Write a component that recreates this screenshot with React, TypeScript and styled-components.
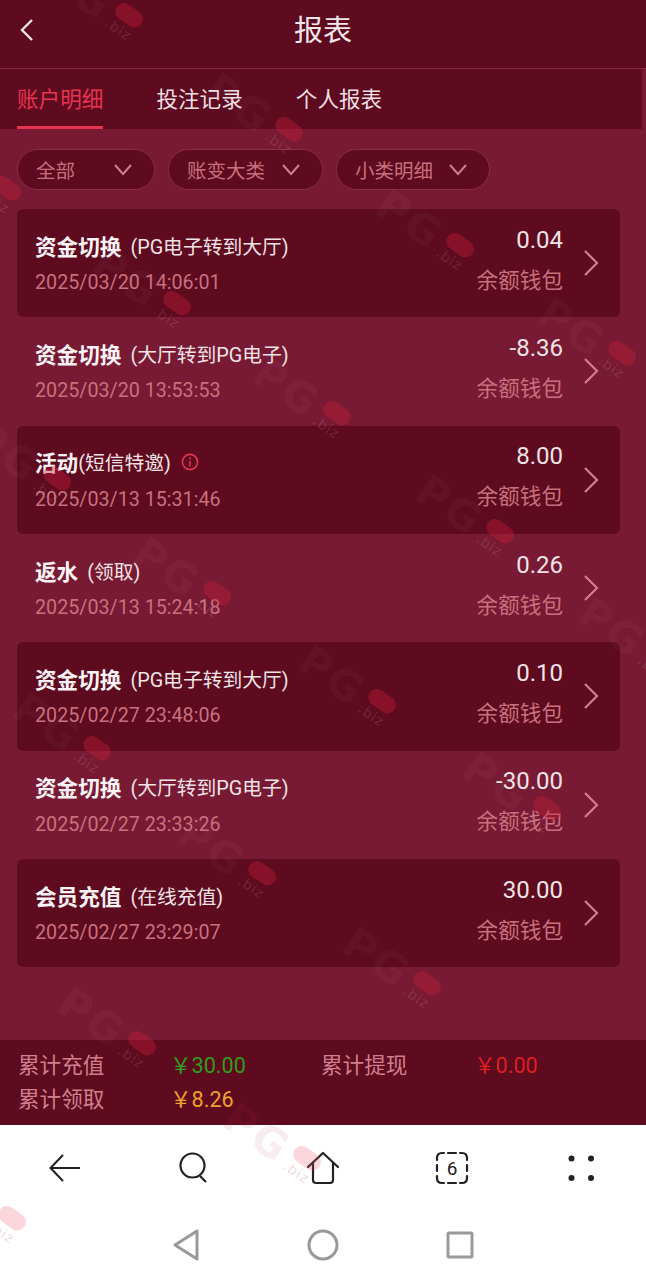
import styled, { createGlobalStyle } from "styled-components";

const GlobalStyle = createGlobalStyle`
	html, body {
		margin: 0;
		padding: 0;
		background: #fff;
	}
	body {
		font-family: Roboto, "Noto Sans CJK SC", "Liberation Sans", sans-serif;
	}
`;

const Page = styled.div`
	position: relative;
	width: 646px;
	height: 1280px;
	overflow: hidden;
	display: flex;
	flex-direction: column;
	background: #781a33;
`;

const Header = styled.header`
	height: 68px;
	flex-shrink: 0;
	box-sizing: content-box;
	display: flex;
	align-items: flex-start;
	justify-content: center;
	position: relative;
	background: #5e0a1f;
	border-bottom: 1px solid #8a2c44;
	color: #f4e6e9;
	font-size: 29px;
	line-height: 62px;
`;

const BackButton = styled.span`
	position: absolute;
	left: 18px;
	top: 17px;
	display: flex;
`;

const Tabs = styled.nav`
	height: 60px;
	width: 642px;
	flex-shrink: 0;
	display: flex;
	gap: 53px;
	padding-left: 17px;
	box-sizing: border-box;
	background: #5e0a1f;
`;

const Tab = styled.span<{ $active?: boolean }>`
	height: 60px;
	box-sizing: border-box;
	line-height: 61px;
	font-size: 21.6px;
	color: ${(p) => (p.$active ? "#e8354f" : "#f0dfe3")};
	border-bottom: 3px solid ${(p) => (p.$active ? "#e8354f" : "transparent")};
`;

const Filters = styled.div`
	display: flex;
	gap: 13px;
	padding: 20px 0 19px 17px;
`;

const Pill = styled.div<{ $width: number }>`
	width: ${(p) => p.$width}px;
	height: 41px;
	box-sizing: border-box;
	padding: 0 21px 0 18px;
	display: flex;
	align-items: center;
	justify-content: space-between;
	border-radius: 21px;
	background: #5e0a1f;
	border: 1px solid #8a2c44;
	color: #c9707f;
	font-size: 19.5px;
`;

const List = styled.div`
	width: 603px;
	margin-left: 17px;
	display: flex;
	flex-direction: column;
`;

const Row = styled.div<{ $shaded: boolean }>`
	height: 108.33px;
	box-sizing: border-box;
	padding: 0 21px 0 18px;
	display: flex;
	align-items: center;
	justify-content: space-between;
	border-radius: 6px;
	background: ${(p) => (p.$shaded ? "#5e0a1f" : "transparent")};
`;

const RowLeft = styled.div`
	display: flex;
	flex-direction: column;
	gap: 9px;
`;

const TitleLine = styled.div`
	display: flex;
	align-items: center;
	height: 30px;
	color: #f1e3e6;
	font-size: 19.8px;
`;

const RowTitle = styled.b`
	font-size: 21.6px;
	font-weight: 700;
	color: #fbf3f5;
`;

const RowNote = styled.span<{ $tight: boolean }>`
	margin-left: ${(p) => (p.$tight ? "0" : "9px")};
`;

const InfoIcon = styled.span`
	display: flex;
	margin-left: 10px;
`;

const DateText = styled.div`
	font-size: 19.7px;
	line-height: 27px;
	color: #c9707f;
`;

const RowRight = styled.div`
	display: flex;
	align-items: center;
	gap: 20px;
`;

const Money = styled.div`
	display: flex;
	flex-direction: column;
	align-items: flex-end;
	gap: 12px;
	padding-bottom: 5px;
`;

const Amount = styled.div`
	font-size: 24px;
	line-height: 28px;
	color: #f1e3e6;
`;

const Wallet = styled.div`
	font-size: 21.6px;
	line-height: 30px;
	color: #c9707f;
`;

const Summary = styled.div`
	margin-top: auto;
	height: 85px;
	flex-shrink: 0;
	box-sizing: border-box;
	padding: 6px 0 0 18px;
	display: grid;
	grid-template-columns: 152px 151px 153px 1fr;
	grid-auto-rows: 34px;
	align-items: center;
	background: #5e0a1f;
	font-size: 21.6px;
`;

const SummaryLabel = styled.span`
	color: #d17f8e;
`;

const SummaryValue = styled.span<{ $color: string }>`
	color: ${(p) => p.$color};
`;

const BrowserBar = styled.div`
	height: 85px;
	flex-shrink: 0;
	display: grid;
	grid-template-columns: repeat(5, 129.2px);
	justify-items: center;
	align-items: center;
	background: #fff;
`;

const SystemBar = styled.div`
	height: 70px;
	flex-shrink: 0;
	display: flex;
	justify-content: center;
	align-items: center;
	gap: 107px;
	background: #fff;
`;

const Mark = styled.div<{ $x: number; $y: number }>`
	position: absolute;
	left: ${(p) => p.$x - 53}px;
	top: ${(p) => p.$y - 25}px;
	width: 106px;
	height: 50px;
	transform: rotate(35deg);
	pointer-events: none;
`;

const MarkLetters = styled.span<{ $light?: boolean }>`
	position: absolute;
	left: 0;
	top: 0;
	font-family: "DejaVu Sans", sans-serif;
	font-size: 42px;
	font-weight: 700;
	letter-spacing: 3px;
	line-height: 46px;
	color: ${(p) => (p.$light ? "rgba(190, 60, 80, 0.1)" : "rgba(255, 255, 255, 0.055)")};
`;

const MarkBiz = styled.span<{ $light?: boolean }>`
	position: absolute;
	left: 76px;
	top: 24px;
	font-family: "DejaVu Sans", sans-serif;
	font-size: 14px;
	letter-spacing: 1px;
	color: ${(p) => (p.$light ? "rgba(190, 60, 80, 0.2)" : "rgba(255, 255, 255, 0.12)")};
`;

const MarkBadge = styled.span<{ $light?: boolean }>`
	position: absolute;
	left: 76px;
	top: 6px;
	width: 30px;
	height: 17px;
	border-radius: 9px;
	background: ${(p) => (p.$light ? "rgba(235, 70, 90, 0.22)" : "rgba(200, 30, 55, 0.38)")};
`;

const marks: { x: number; y: number; light?: boolean }[] = [
	{ x: 92, y: 2 },
	{ x: 252, y: 116 },
	{ x: 423, y: 232 },
	{ x: 140, y: 290 },
	{ x: 585, y: 340 },
	{ x: 300, y: 400 },
	{ x: -30, y: 175 },
	{ x: 463, y: 518 },
	{ x: 20, y: 465 },
	{ x: 180, y: 580 },
	{ x: 345, y: 688 },
	{ x: 625, y: 640 },
	{ x: 60, y: 735 },
	{ x: 510, y: 795 },
	{ x: 225, y: 860 },
	{ x: 390, y: 970 },
	{ x: 105, y: 1030 },
	{ x: 270, y: 1145, light: true },
	{ x: -25, y: 1205, light: true },
];

const rows = [
	{ title: "资金切换", note: "(PG电子转到大厅)", date: "2025/03/20 14:06:01", amount: "0.04" },
	{ title: "资金切换", note: "(大厅转到PG电子)", date: "2025/03/20 13:53:53", amount: "-8.36" },
	{ title: "活动", note: "(短信特邀)", date: "2025/03/13 15:31:46", amount: "8.00", info: true },
	{ title: "返水", note: "(领取)", date: "2025/03/13 15:24:18", amount: "0.26" },
	{ title: "资金切换", note: "(PG电子转到大厅)", date: "2025/02/27 23:48:06", amount: "0.10" },
	{ title: "资金切换", note: "(大厅转到PG电子)", date: "2025/02/27 23:33:26", amount: "-30.00" },
	{ title: "会员充值", note: "(在线充值)", date: "2025/02/27 23:29:07", amount: "30.00" },
];

const filters = [
	{ label: "全部", width: 138 },
	{ label: "账变大类", width: 155 },
	{ label: "小类明细", width: 154 },
];

const Caret = () => (
	<svg width="20" height="14" viewBox="0 0 20 14" fill="none" stroke="#d17f8e" strokeWidth="2">
		<path d="M2 2l8 9 8-9" />
	</svg>
);

const Chevron = () => (
	<svg width="16" height="28" viewBox="0 0 16 28" fill="none" stroke="#d17f8e" strokeWidth="2.2">
		<path d="M2 2l12 12L2 26" />
	</svg>
);

const App = () => {
	return (
		<Page>
			<GlobalStyle />
			<Header>
				<BackButton>
					<svg width="20" height="26" viewBox="0 0 20 26" fill="none" stroke="#f4e6e9" strokeWidth="2.4">
						<path d="M14 3L4 13l10 10" />
					</svg>
				</BackButton>
				报表
			</Header>
			<Tabs>
				<Tab $active>账户明细</Tab>
				<Tab>投注记录</Tab>
				<Tab>个人报表</Tab>
			</Tabs>
			<Filters>
				{filters.map((f) => (
					<Pill key={f.label} $width={f.width}>
						{f.label}
						<Caret />
					</Pill>
				))}
			</Filters>
			<List>
				{rows.map((r, i) => (
					<Row key={r.date} $shaded={i % 2 === 0}>
						<RowLeft>
							<TitleLine>
								<RowTitle>{r.title}</RowTitle>
								<RowNote $tight={!!r.info}>{r.note}</RowNote>
								{r.info && (
									<InfoIcon>
										<svg width="18" height="18" viewBox="0 0 18 18" fill="none" stroke="#e0354c" strokeWidth="1.6">
											<circle cx="9" cy="9" r="7.6" />
											<path d="M9 8v5.2M9 4.6v1.8" />
										</svg>
									</InfoIcon>
								)}
							</TitleLine>
							<DateText>{r.date}</DateText>
						</RowLeft>
						<RowRight>
							<Money>
								<Amount>{r.amount}</Amount>
								<Wallet>余额钱包</Wallet>
							</Money>
							<Chevron />
						</RowRight>
					</Row>
				))}
			</List>
			<Summary>
				<SummaryLabel>累计充值</SummaryLabel>
				<SummaryValue $color="#2e9e1c">￥30.00</SummaryValue>
				<SummaryLabel>累计提现</SummaryLabel>
				<SummaryValue $color="#dd2020">￥0.00</SummaryValue>
				<SummaryLabel>累计领取</SummaryLabel>
				<SummaryValue $color="#eda22e">￥8.26</SummaryValue>
			</Summary>
			<BrowserBar>
				<svg width="34" height="30" viewBox="0 0 34 30" fill="none" stroke="#222" strokeWidth="2">
					<path d="M32 15H3M15 2L2.5 15 15 28" />
				</svg>
				<svg width="32" height="32" viewBox="0 0 32 32" fill="none" stroke="#222" strokeWidth="2.2">
					<circle cx="14.5" cy="13.5" r="12" />
					<path d="M22 24l6 6" />
				</svg>
				<svg width="34" height="34" viewBox="0 0 34 34" fill="none" stroke="#222" strokeWidth="2.2" strokeLinejoin="round" strokeLinecap="round">
					<path d="M2 16L17 2l15 14M7 12.5V29q0 3 3 3h14q3 0 3-3V12.5" />
				</svg>
				<svg width="34" height="34" viewBox="0 0 34 34" fill="none" stroke="#222" strokeWidth="2.2" strokeLinecap="round">
					<path d="M2 9V7q0-5 5-5h2M13 2h8M25 2h2q5 0 5 5v2M32 14v6M32 25v2q0 5-5 5h-2M21 32h-8M9 32H7q-5 0-5-5v-2M2 20v-6" />
					<text x="17" y="23.5" textAnchor="middle" fontFamily="Roboto, sans-serif" fontSize="19" fill="#222" stroke="none">6</text>
				</svg>
				<svg width="26" height="26" viewBox="0 0 26 26" fill="#222">
					<circle cx="3.5" cy="3.5" r="3" />
					<circle cx="23" cy="3.5" r="3" />
					<circle cx="3.5" cy="23" r="3" />
					<circle cx="23" cy="23" r="3" />
				</svg>
			</BrowserBar>
			<SystemBar>
				<svg width="28" height="34" viewBox="0 0 28 34" fill="none" stroke="#999" strokeWidth="3" strokeLinejoin="round">
					<path d="M25 3v28L3 17z" />
				</svg>
				<svg width="32" height="32" viewBox="0 0 32 32" fill="none" stroke="#999" strokeWidth="3">
					<circle cx="16" cy="16" r="14" />
				</svg>
				<svg width="28" height="28" viewBox="0 0 28 28" fill="none" stroke="#999" strokeWidth="3" strokeLinejoin="round">
					<rect x="2" y="2" width="24" height="24" rx="1" />
				</svg>
			</SystemBar>
			{marks.map((m) => (
				<Mark key={`${m.x}-${m.y}`} $x={m.x} $y={m.y}>
					<MarkLetters $light={m.light}>PG</MarkLetters>
					<MarkBadge $light={m.light} />
					<MarkBiz $light={m.light}>.biz</MarkBiz>
				</Mark>
			))}
		</Page>
	);
};

export default App;
